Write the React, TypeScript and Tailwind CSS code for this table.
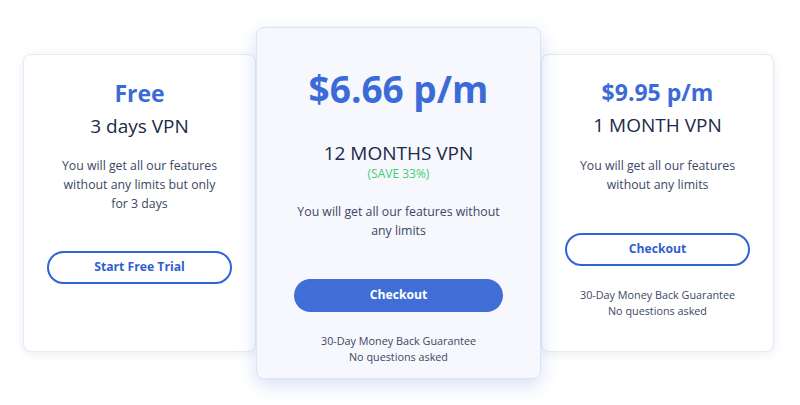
import React from 'react'

const font = { fontFamily: '"Open Sans", "Liberation Sans", sans-serif' }

const App = () => {
  return (
    <div className="w-[800px] h-[405px] bg-white flex items-center pl-[23px]" style={font}>
      {/* Left card */}
      <div className="w-[233px] h-[298px] bg-white rounded-[8px] border border-[#e4eaf6] shadow-[0_2px_8px_rgba(80,110,170,0.12)] flex flex-col items-center pt-[22px] px-[23px]">
        <h2 className="text-[23px] leading-[32px] font-bold text-[#3b6bd6]">Free</h2>
        <h3 className="mt-[3px] text-[19px] leading-[28px] text-[#1b2a4a]">3 days VPN</h3>
        <p className="mt-[16px] max-w-[170px] text-[12.3px] leading-[19px] text-[#3b4763] text-center">
          You will get all our features without any limits but only for 3 days
        </p>
        <button className="mt-[38px] w-full h-[33px] rounded-full border-2 border-[#2f63d8] text-[#2f5fcf] text-[12.2px] font-bold">
          Start Free Trial
        </button>
      </div>

      {/* Middle card */}
      <div className="relative z-10 w-[285px] h-[352px] bg-[#f6f8fd] rounded-[8px] border border-[#dbe4f7] shadow-[0_6px_18px_rgba(70,110,210,0.22)] flex flex-col items-center pt-[37px] px-[37px]">
        <h2 className="text-[37px] leading-[48px] font-bold text-[#3b6bd6]">$6.66 p/m</h2>
        <h3 className="mt-[26px] text-[19px] leading-[28px] text-[#1b2a4a]">12 MONTHS VPN</h3>
        <span className="-mt-[1px] text-[12px] leading-[16px] text-[#3fcf72]">(SAVE 33%)</span>
        <p className="mt-[20px] text-[12.3px] leading-[19px] text-[#3b4763] text-center">
          You will get all our features without any limits
        </p>
        <button className="mt-[39px] w-full h-[33px] rounded-full bg-[#416ed6] text-white text-[12.2px] font-bold">
          Checkout
        </button>
        <p className="mt-[21px] text-[10.8px] leading-[16px] text-[#3b4763] text-center">
          30-Day Money Back Guarantee
          <br />
          No questions asked
        </p>
      </div>

      {/* Right card */}
      <div className="w-[233px] h-[298px] bg-white rounded-[8px] border border-[#e4eaf6] shadow-[0_2px_8px_rgba(80,110,170,0.12)] flex flex-col items-center pt-[21px] px-[23px]">
        <h2 className="text-[23px] leading-[32px] font-bold text-[#3b6bd6]">$9.95 p/m</h2>
        <h3 className="mt-[3px] text-[19px] leading-[28px] text-[#1b2a4a]">1 MONTH VPN</h3>
        <p className="mt-[17px] text-[12.3px] leading-[19px] text-[#3b4763] text-center">
          You will get all our features without any limits
        </p>
        <button className="mt-[39px] w-full h-[33px] rounded-full border-2 border-[#2f63d8] text-[#2f5fcf] text-[12.2px] font-bold">
          Checkout
        </button>
        <p className="mt-[21px] text-[10.8px] leading-[16px] text-[#3b4763] text-center">
          30-Day Money Back Guarantee
          <br />
          No questions asked
        </p>
      </div>
    </div>
  )
}

export default App
